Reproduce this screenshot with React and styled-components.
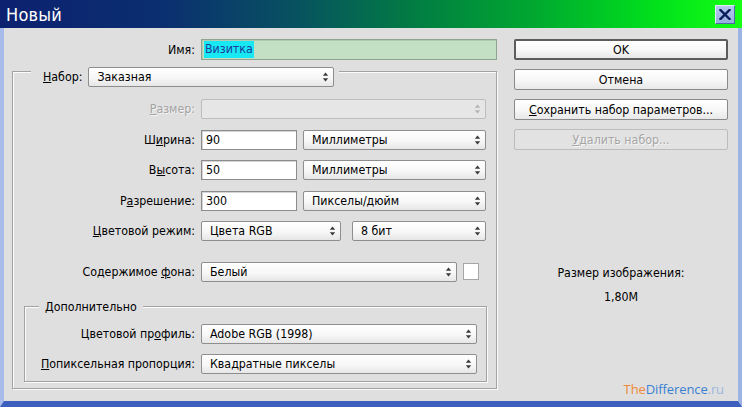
import React from 'react';
import styled, { createGlobalStyle } from 'styled-components';

const FONT = `"DejaVu Sans Condensed", "DejaVu Sans", sans-serif`;

const GlobalStyle = createGlobalStyle`
  html, body { margin: 0; padding: 0; background: #dfdfdf; }
  body { font-family: ${FONT}; font-size: 12.3px; color: #000; }
  * { box-sizing: border-box; }
`;

const Window = styled.div`
  width: 742px;
  height: 407px;
  display: flex;
  flex-direction: column;
  background: #dfdfdf;
  overflow: hidden;
`;

const TitleBar = styled.div`
  height: 28px;
  flex: none;
  display: flex;
  align-items: center;
  padding: 0 7px 0 6px;
  background: linear-gradient(90deg, #0c2170 0%, #0b2f70 22%, #075260 40%, #027a44 55%, #00a830 72%, #00e01c 88%, #14ff14 100%);
`;

const Title = styled.div`
  color: #fff;
  font-size: 18px;
  font-family: ${FONT};
  letter-spacing: 0.2px;
`;

const CloseButton = styled.div`
  margin-left: auto;
  width: 20px;
  height: 19px;
  display: flex;
  align-items: center;
  justify-content: center;
  background: linear-gradient(#b4c8ee, #98b0de);
  border: 1px solid;
  border-color: #e4ecfa #4d6aa8 #4d6aa8 #e4ecfa;
`;

const Frame = styled.div`
  flex: 1;
  display: flex;
  border-left: 4px solid #a7bcea;
  border-right: 4px solid #9db3e4;
  border-bottom: 6px solid #3d5fbd;
  padding: 11px 10px 0 8px;
  gap: 17px;
`;

const LeftCol = styled.div`
  width: 485px;
  flex: none;
  display: flex;
  flex-direction: column;
`;

const RightCol = styled.div`
  width: 214px;
  flex: none;
  display: flex;
  flex-direction: column;
  gap: 9px;
  padding-bottom: 4px;
`;

const Row = styled.div`
  display: flex;
  align-items: center;
  gap: 6px;
  height: ${(p) => p.$h || 20}px;
  margin-top: ${(p) => p.$mt || 0}px;
`;

const Label = styled.div`
  width: ${(p) => p.$w}px;
  flex: none;
  text-align: right;
  white-space: nowrap;
  color: ${(p) => (p.$disabled ? '#a3a3a3' : '#000')};
  text-shadow: ${(p) => (p.$disabled ? '1px 1px 0 #f4f4f4' : 'none')};
`;

const TextInput = styled.div`
  width: ${(p) => p.$w}px;
  height: 100%;
  flex: none;
  display: flex;
  align-items: center;
  padding-left: 4px;
  background: #fff;
  border: 1px solid #8c8c8c;
  box-shadow: inset 1px 1px 0 #d4d4d4;
`;

const NameInput = styled(TextInput)`
  background: #c3e0c5;
  border-color: #8fa58f;
  box-shadow: inset 1px 1px 0 #b0cbb2;
  padding-left: 2px;
`;

const Selected = styled.span`
  background: #18e8f2;
  color: #1a3f9e;
  padding: 1px 1px 2px;
`;

const SelectBox = styled.div`
  width: ${(p) => p.$w}px;
  height: 20px;
  flex: none;
  display: flex;
  align-items: center;
  margin-left: ${(p) => p.$ml || 0}px;
  padding: 0 4px 0 8px;
  border: 1px solid ${(p) => (p.$disabled ? '#bdbdbd' : '#8e8e8e')};
  border-radius: 2px;
  background: ${(p) =>
    p.$disabled ? '#e6e6e6' : 'linear-gradient(#ffffff 0%, #f7f7f7 55%, #e6e6e6 100%)'};
  white-space: nowrap;
`;

const SelectText = styled.span`
  flex: 1;
`;

const Arrows = ({ color = '#3a3a3a' }) => (
  <svg width="7" height="10" viewBox="0 0 7 10">
    <polygon points="3.5,0.5 6.2,3.8 0.8,3.8" fill={color} />
    <polygon points="0.8,6.2 6.2,6.2 3.5,9.5" fill={color} />
  </svg>
);

const Select = ({ w, ml, disabled, children }) => (
  <SelectBox $w={w} $ml={ml} $disabled={disabled}>
    <SelectText>{children}</SelectText>
    <Arrows color={disabled ? '#b4b4b4' : '#3a3a3a'} />
  </SelectBox>
);

const Swatch = styled.div`
  width: 16px;
  height: 17px;
  flex: none;
  background: #fff;
  border: 1px solid #a6a6a6;
`;

const Group = styled.fieldset`
  margin: -5px 0 0 0;
  padding: 12px 0 6px 0;
  min-width: 0;
  border: 1px solid #a2a2a2;
  box-shadow: inset 1px 1px 0 #fbfbfb, 1px 1px 0 #fbfbfb;
  display: flex;
  flex-direction: column;
  gap: 10.5px;
`;

const GroupLegend = styled.legend`
  margin-left: 18px;
  padding: 12px 0 0 0;
`;

const LegendInner = styled.div`
  display: flex;
  align-items: center;
  gap: 6px;
  height: 20px;
  padding: 0 5px 0 12px;
  background: #dfdfdf;
`;

const SubGroup = styled.fieldset`
  margin: 7.5px 9px 0 11px;
  padding: 10px 0 7px 0;
  min-width: 0;
  border: 1px solid #a2a2a2;
  box-shadow: inset 1px 1px 0 #fbfbfb, 1px 1px 0 #fbfbfb;
  display: flex;
  flex-direction: column;
  gap: 10px;
`;

const SubLegend = styled.legend`
  margin-left: 14px;
  padding: 0 6px;
  line-height: 14px;
  background: #dfdfdf;
`;

const Button = styled.div`
  height: 21px;
  display: flex;
  align-items: center;
  justify-content: center;
  border-radius: 2px;
  border: ${(p) => (p.$default ? '2px solid #5c5c5c' : `1px solid ${p.$disabled ? '#bcbcbc' : '#8a8a8a'}`)};
  background: ${(p) =>
    p.$disabled ? '#e2e2e2' : 'linear-gradient(#ffffff 0%, #f8f8f8 50%, #e8e8e8 100%)'};
  color: ${(p) => (p.$disabled ? '#a6a6a6' : '#000')};
  text-shadow: ${(p) => (p.$disabled ? '1px 1px 0 #f6f6f6' : 'none')};
`;

const Info = styled.div`
  margin-top: 106px;
  display: flex;
  flex-direction: column;
  align-items: center;
  gap: 8px;
  line-height: 16px;
`;

const Watermark = styled.div`
  margin-top: auto;
  align-self: flex-end;
  margin-right: 4px;
  font-family: "Open Sans", "DejaVu Sans", sans-serif;
  font-size: 13px;
  line-height: 16px;
  letter-spacing: -0.1px;
`;

const Tone = styled.span`
  color: ${(p) => p.$c};
`;

export default function App() {
  return (
    <>
      <GlobalStyle />
      <Window>
        <TitleBar>
          <Title>Новый</Title>
          <CloseButton>
            <svg width="12" height="11" viewBox="0 0 12 11">
              <path d="M1.5 1 L10.5 10 M10.5 1 L1.5 10" stroke="#0b1d5c" strokeWidth="2.4" strokeLinecap="square" />
            </svg>
          </CloseButton>
        </TitleBar>
        <Frame>
          <LeftCol>
            <Row $h={21}>
              <Label $w={183}>Имя:</Label>
              <NameInput $w={296}>
                <Selected>Визитка</Selected>
              </NameInput>
            </Row>
            <Group>
              <GroupLegend>
                <LegendInner>
                  <span><u>Н</u>абор:</span>
                  <Select w={246}>Заказная</Select>
                </LegendInner>
              </GroupLegend>
              <Row>
                <Label $w={182} $disabled><u>Р</u>азмер:</Label>
                <Select w={285} disabled></Select>
              </Row>
              <Row>
                <Label $w={182}>Ш<u>и</u>рина:</Label>
                <TextInput $w={96}>90</TextInput>
                <Select w={183}>Миллиметры</Select>
              </Row>
              <Row>
                <Label $w={182}>В<u>ы</u>сота:</Label>
                <TextInput $w={96}>50</TextInput>
                <Select w={183}>Миллиметры</Select>
              </Row>
              <Row>
                <Label $w={182}>Р<u>а</u>зрешение:</Label>
                <TextInput $w={96}>300</TextInput>
                <Select w={183}>Пикселы/дюйм</Select>
              </Row>
              <Row>
                <Label $w={182}><u>Ц</u>ветовой режим:</Label>
                <Select w={140}>Цвета RGB</Select>
                <Select w={134} ml={5}>8 бит</Select>
              </Row>
              <Row $mt={10}>
                <Label $w={182}>Содержимое <u>ф</u>она:</Label>
                <Select w={256}>Белый</Select>
                <Swatch />
              </Row>
              <SubGroup>
                <SubLegend>Дополнительно</SubLegend>
                <Row>
                  <Label $w={170}>Цветовой пр<u>о</u>филь:</Label>
                  <Select w={276}>Adobe RGB (1998)</Select>
                </Row>
                <Row>
                  <Label $w={170}><u>П</u>опиксельная пропорция:</Label>
                  <Select w={276}>Квадратные пикселы</Select>
                </Row>
              </SubGroup>
            </Group>
          </LeftCol>
          <RightCol>
            <Button $default>OK</Button>
            <Button>Отмена</Button>
            <Button><span><u>С</u>охранить набор параметров...</span></Button>
            <Button $disabled><span><u>У</u>далить набор...</span></Button>
            <Info>
              <div>Размер изображения:</div>
              <div>1,80M</div>
            </Info>
            <Watermark>
              <Tone $c="#f0893a">The</Tone>
              <Tone $c="#3b7fd2">Difference</Tone>
              <Tone $c="#9cb7dd">.ru</Tone>
            </Watermark>
          </RightCol>
        </Frame>
      </Window>
    </>
  );
}
